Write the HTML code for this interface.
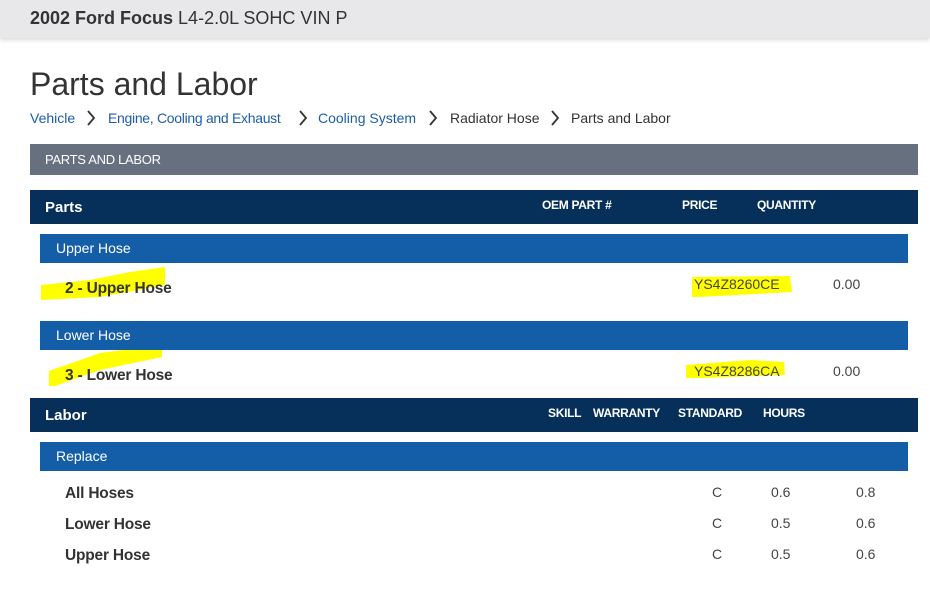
<!DOCTYPE html>
<html><head><meta charset="utf-8"><style>
*{margin:0;padding:0;box-sizing:border-box}
body{width:930px;height:596px;background:#fff;font-family:"Liberation Sans",sans-serif;position:relative;overflow:hidden;color:#333}
.a{position:absolute;white-space:nowrap}
.bar{position:absolute;left:30px;width:888px}
.sub{position:absolute;left:40px;width:868px;background:#145ea8;color:#fff;font-size:14px;padding-left:16px;line-height:29px;height:29px}
.h{color:#fff;font-weight:bold;font-size:12px;letter-spacing:-0.3px}
.v{font-size:14px;color:#444}
.n{font-size:15.5px;color:#333;font-weight:bold;letter-spacing:-0.2px}
.bc{font-size:14px;top:110px;color:#333}
.b{color:#1d5ea8}
.ch{position:absolute;top:112px}
</style></head><body>
<div class="a" style="left:0;top:0;width:930px;height:38px;background:#e8e8ea;box-shadow:0 2px 4px rgba(0,0,0,.15)"></div>
<div class="a" style="left:30px;top:8px;font-size:18px;color:#333"><b>2002 Ford Focus</b> L4-2.0L SOHC VIN P</div>
<div class="a" style="left:30px;top:66px;font-size:32px;font-weight:300;color:#333">Parts and Labor</div>
<div class="a bc b" style="left:30px">Vehicle</div>
<div class="a bc b" style="left:108px;letter-spacing:-0.3px">Engine, Cooling and Exhaust</div>
<div class="a bc b" style="left:318px">Cooling System</div>
<div class="a bc" style="left:450px">Radiator Hose</div>
<div class="a bc" style="left:571px">Parts and Labor</div>
<svg class="a" style="left:0;top:0" width="930" height="140"><g fill="none" stroke="#333" stroke-width="1.8"><path d="M88,111 L94,118 L88,125"/><path d="M300,111 L306,118 L300,125"/><path d="M430,111 L436,118 L430,125"/><path d="M552,111 L558,118 L552,125"/></g></svg>
<div class="bar" style="top:144px;height:31px;background:#67707e;color:#fff;font-size:13px;padding-left:15px;line-height:31px;letter-spacing:-0.3px">PARTS AND LABOR</div>
<div class="bar" style="top:190px;height:34px;background:#06305a"></div>
<div class="a" style="left:45px;top:199px;color:#fff;font-weight:bold;font-size:15px">Parts</div>
<div class="a h" style="left:542px;top:198px">OEM PART #</div>
<div class="a h" style="left:682px;top:198px">PRICE</div>
<div class="a h" style="left:757px;top:198px">QUANTITY</div>
<div class="sub" style="top:234px">Upper Hose</div>
<svg class="a" style="left:0;top:0" width="930" height="596"><polygon points="41,285 90,280 130,272 165,267 165,285 100,297 41,300" fill="#ff0"/><polygon points="692,277 790,276 792,292 700,297 692,297" fill="#ff0"/><polygon points="49,371 100,353 162,345 162,357 100,370 55,386 49,386" fill="#ff0"/><rect x="128" y="345" width="34" height="4" fill="#1d5a1d"/><polygon points="686,365 750,360 784,362 785,375 700,378 686,378" fill="#ff0"/></svg>
<div class="a n" style="left:65px;top:280px">2 - Upper Hose</div>
<div class="a v" style="left:694px;top:276px">YS4Z8260CE</div>
<div class="a v" style="left:833px;top:276px">0.00</div>
<div class="sub" style="top:321px">Lower Hose</div>
<div class="a n" style="left:65px;top:367px">3 - Lower Hose</div>
<div class="a v" style="left:694px;top:363px">YS4Z8286CA</div>
<div class="a v" style="left:833px;top:363px">0.00</div>
<div class="bar" style="top:398px;height:34px;background:#06305a"></div>
<div class="a" style="left:45px;top:407px;color:#fff;font-weight:bold;font-size:15px">Labor</div>
<div class="a h" style="left:548px;top:406px">SKILL</div>
<div class="a h" style="left:593px;top:406px">WARRANTY</div>
<div class="a h" style="left:678px;top:406px">STANDARD</div>
<div class="a h" style="left:763px;top:406px">HOURS</div>
<div class="sub" style="top:442px">Replace</div>
<div class="a n" style="left:65px;top:485px">All Hoses</div>
<div class="a n" style="left:65px;top:516px">Lower Hose</div>
<div class="a n" style="left:65px;top:547px">Upper Hose</div>
<div class="a v" style="left:712px;top:484px">C</div><div class="a v" style="left:771px;top:484px">0.6</div><div class="a v" style="left:856px;top:484px">0.8</div>
<div class="a v" style="left:712px;top:515px">C</div><div class="a v" style="left:771px;top:515px">0.5</div><div class="a v" style="left:856px;top:515px">0.6</div>
<div class="a v" style="left:712px;top:546px">C</div><div class="a v" style="left:771px;top:546px">0.5</div><div class="a v" style="left:856px;top:546px">0.6</div>
</body></html>
